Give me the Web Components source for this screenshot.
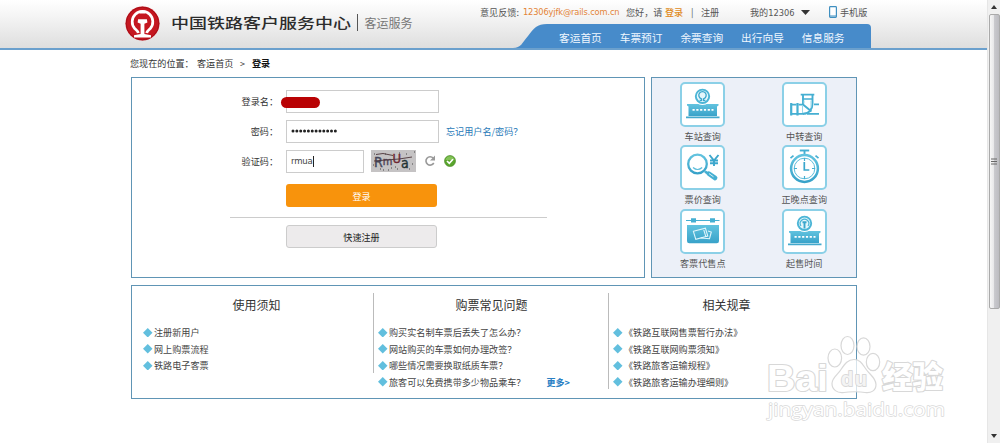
<!DOCTYPE html>
<html lang="zh-CN">
<head>
<meta charset="utf-8">
<title>登录 | 客运服务</title>
<style>
  html, body { margin: 0; height: 443px; overflow: hidden; background: #fff; }
  body { position: relative; font: 9.1px/12px "Noto Sans CJK SC", sans-serif; color: #444; }
</style>
</head>
<body>
<login-page></login-page>
<script>
const railMark = `
  <path d="M-4.200 9.600C-4.600 7.400-6 6.700-7.800 5A10.300 10.300 0 1 1 7.800 5C6 6.700 4.600 7.400 4.200 9.600" fill="none" stroke="#fff" stroke-width="2.700"/>
  <path d="M-3-13h6v3h-6z" fill="#fff"/>
  <path d="M-4.400-4.200h8.800l.5 3.200-3 1.300v10.200l6.600 1.300v2.300h-17v-2.300l6.600-1.300v-10.200l-3-1.300z" fill="#fff"/>`;

const building = (mark) => `
  <path d="M7 22h31.500v1.600l-1.500 1V34H8.500v-9.400L7 23.600z" fill="url(#g)"/>
  <path d="M6 34.600h33.500v1.700H6z" fill="#43a9cd"/>
  <path d="M12.500 27.800h21" stroke="#fff" stroke-width="1.800" stroke-dasharray="2.200 1.600"/>
  <circle cx="22.500" cy="14.300" r="8.600" fill="#fff"/>
  <circle cx="22.500" cy="14.300" r="6.700" fill="#e5f6fb" stroke="#4cb5d6" stroke-width="1.900"/>
  ${mark}`;

const serviceIcons = {
  station: building(`<path d="M19.600 18.300h1.900v-1.400a3.700 3.700 0 1 1 2 0v1.400h1.900" fill="none" stroke="#3ba6cc" stroke-width="1.300"/>`),
  saletime: building(`<path d="M19 17a4.300 4.300 0 1 1 7 0" fill="none" stroke="#4cb5d6" stroke-width="1.200"/><path d="M20.500 13.300h4M22.500 13v6.500" stroke="#3ba6cc" stroke-width="1.900"/>`),
  transfer: `
    <path d="M18.700 12.700h13.600M20 17h11M10 22.600h4.500M16.500 22.600H21M10 31.800h12M32 22.400h5M25 31.800h12" fill="none" stroke="#45afd2" stroke-width="1.700"/>
    <path d="M21 13v9.500l8.500 7M30.500 13v9c0 5-3.500 9.800-9.500 9.800" fill="none" stroke="#45afd2" stroke-width="1.900"/>
    <path d="M9.200 21v12.500M15.500 21v12.500" stroke="#45afd2" stroke-width="2.200"/>
    <path d="M20.500 23v8M22 18.500v3M29 18.500v7" stroke="#9ad8ea" stroke-width="1"/>`,
  price: `
    <circle cx="17.500" cy="19" r="9.300" fill="#fff" stroke="url(#g)" stroke-width="2.300"/>
    <path d="M13 22.500q4.500 4 9.200 0" fill="none" stroke="#5cbcda" stroke-width="1.200"/>
    <path d="M25 26.500l2.300 1.600" stroke="#45afd2" stroke-width="2.500"/>
    <path d="M28.800 28.600l6.300 4.400" stroke="#45afd2" stroke-width="4.600" stroke-linecap="round"/>
    <path d="M29 28.600l4.500 3.200" stroke="#d5eff7" stroke-width="1"/>
    <path d="M29.500 10l4.500 5.500L38.500 10M34 15v6M30 15.500h8M30 18.200h8" fill="none" stroke="#3ba6cc" stroke-width="1.900"/>`,
  clock: `
    <path d="M17.800 5.500h9.400" stroke="#45afd2" stroke-width="1.900"/><path d="M22.500 6v5" stroke="#45afd2" stroke-width="1.900"/>
    <path d="M8.500 13.200l3-2.600M36.500 13.200l-3-2.600" stroke="#45afd2" stroke-width="1.700"/>
    <circle cx="22.500" cy="23.500" r="13.400" fill="#fff" stroke="url(#g)" stroke-width="2.500"/>
    <circle cx="22.500" cy="23.500" r="10.300" fill="none" stroke="#5cbcda" stroke-width="1"/>
    <path d="M22.500 13v3M22.500 31v3M12 23.500h3M30 23.500h3" stroke="#45afd2" stroke-width="1.200"/>
    <path d="M22.300 17v8h5" fill="none" stroke="#3ba6cc" stroke-width="1.700"/>`,
  agency: `
    <path d="M6 11.500h33.500" stroke="#45afd2" stroke-width="1.200"/>
    <path d="M11 9.300h5v4.300h-5zM30 9.300h5v4.300h-5z" fill="#45afd2"/>
    <path d="M7 16h32v16q0 2.300-2.300 2.300H9.300Q7 34.300 7 32z" fill="url(#g)"/>
    <path d="M13.400 22.300l12-3.200 2.400 8-12 3.300zM28 22l3.300 1-1.800 6.700-9-.8M23.500 19.800l2.300 7.800" fill="none" stroke="#e0f5fb" stroke-width="1.100"/>`
};

// Base class: puts the markup of each element in its shadow root
class BaseElement extends HTMLElement {
  constructor() {
    super();
    this.attachShadow({ mode: "open" });
  }

  connectedCallback() {
    this.shadowRoot.innerHTML = this.template();
  }
}

class SiteHeader extends BaseElement {
  template() {
    return `
      <style>
        :host { display: block; height: 48px; border-bottom: 2px solid #6ba0cd; background: linear-gradient(#fff, #f4f4f4 35%, #dedede); }
        .bar { display: grid; grid-template-columns: 40px 186px 120px 1fr; padding-left: 125px; height: 48px; }
        .logo { width: 35px; height: 35px; margin-top: 5.500px; }
        .name { font-size: 18px; line-height: 20px; font-weight: 500; color: #2c2c2c; white-space: nowrap; margin: 12px 0 0 6px; height: 20px; transform: scaleY(.76); }
        .sub { font-size: 12px; line-height: 18px; color: #777; border-left: 1.500px solid #555; height: 17px; margin: 14px 0 0 6px; padding-left: 6.500px; white-space: nowrap; }
        .right { display: flex; flex-direction: column; }
        .utility { display: grid; grid-template-columns: 43px 103px 39px 26px 10px 49px 51px 28px 11px 32px; margin-left: 9px; height: 24px; line-height: 24px; align-items: center; white-space: nowrap; color: #555; }
        .utility span { height: 24px; }
        .mail { color: #e38335; font: 9.200px/24px "DejaVu Sans Condensed", sans-serif; letter-spacing: -.14px; }
        .num { font: 9.200px/12px "DejaVu Sans Condensed", sans-serif; }
        .enter { color: #e08b22; font-weight: 500; }
        nav { position: relative; margin-left: 42px; width: 358px; height: 24px; }
        .shape { display: block; width: 358px; height: 24px; }
        .links { position: absolute; inset: 0; display: grid; grid-template-columns: repeat(5, 60.700px); padding-left: 46px; font-size: 10.700px; line-height: 27px; color: #f0f7ff; white-space: nowrap; }
      </style>
      <div class="bar">
        <svg class="logo" viewBox="-17.500 -17.500 35 35"><circle r="17" fill="#c51720"/><circle r="16.300" fill="none" stroke="#a70e18" stroke-width="1"/>${railMark}</svg>
        <div class="name">中国铁路客户服务中心</div>
        <div class="sub">客运服务</div>
        <div class="right">
          <div class="utility">
            <span>意见反馈:</span><span class="mail">12306yjfk@rails.com.cn</span><span>您好，请</span><span class="enter">登录</span><span>|</span><span>注册</span><span>我的<span class="num">12306</span></span>
            <svg width="9" height="5" viewBox="0 0 9 5"><path d="M0 0h9L4.500 5z" fill="#333"/></svg>
            <svg width="8" height="12" viewBox="0 0 8 12"><rect x=".6" y=".6" width="6.800" height="10.800" rx=".8" fill="#fff" stroke="#3f8fc0" stroke-width="1.200"/><path d="M1 10h6" stroke="#3f8fc0"/></svg>
            <span>手机版</span>
          </div>
          <nav>
            <svg class="shape" viewBox="0 0 358 24"><path d="M0 24C8 24 9 19 15 12C21 4 24 0 34 0H354q4 0 4 4V24z" fill="#478bca"/></svg>
            <div class="links"><span>客运首页</span><span>车票预订</span><span>余票查询</span><span>出行向导</span><span>信息服务</span></div>
          </nav>
        </div>
      </div>`;
  }
}

class BlueFrame extends BaseElement {
  template() {
    return `
      <style>
        :host { display: block; box-sizing: border-box; border: 1px solid #6095b5; background: var(--frame-fill, #fff); }
      </style>
      <slot></slot>`;
  }
}

class LoginRow extends BaseElement {
  template() {
    return `
      <style>
        :host { display: grid; grid-template-columns: 146px 1fr; height: 23px; line-height: 24px; margin-bottom: 7px; }
        .label { text-align: right; color: #333; white-space: nowrap; }
        .field { display: flex; align-items: center; padding-left: 8px; }
      </style>
      <div class="label">${this.getAttribute("label")}</div>
      <div class="field"><slot></slot></div>`;
  }
}

class LoginForm extends BaseElement {
  template() {
    return `
      <style>
        :host { display: block; padding-top: 11px; }
        .input { position: relative; box-sizing: border-box; width: 153px; height: 23px; border: 1px solid #ccc; background: #fff; display: flex; align-items: center; padding-left: 4px; color: #444; }
        .short { width: 78px; font: 9.500px/20px "DejaVu Sans Condensed", sans-serif; letter-spacing: -.2px; }
        .caret { width: 1px; height: 11px; background: #222; }
        .mask { position: absolute; left: -6px; top: 6px; width: 39px; height: 11px; border-radius: 6px; background: #b90204; }
        .forgot { margin-left: 7px; color: #2a7ab8; }
        .captcha { margin-left: 7px; }
        .refresh { margin-left: 8px; }
        .ok { margin-left: 8px; }
        .btn { box-sizing: border-box; width: 151px; height: 23px; line-height: 24px; margin-left: 154px; border-radius: 3px; text-align: center; }
        .orange { margin-top: 12px; background: #f8930c; color: #fff; }
        .gray { border: 1px solid #ccc; line-height: 22px; background: #edebec; color: #222; }
        hr { border: 0; height: 1px; background: #ccc; margin: 10px 0 7px 98px; width: 317px; }
      </style>
      <login-row label="登录名："><div class="input"><span class="mask"></span></div></login-row>
      <login-row label="密码：">
        <div class="input"><svg width="47" height="6" viewBox="0 0 47 6"><path d="M2 3h44" stroke="#222" stroke-width="3" stroke-linecap="round" stroke-dasharray="0 3.850"/></svg></div>
        <span class="forgot">忘记用户名/密码？</span>
      </login-row>
      <login-row label="验证码：">
        <div class="input short">rmua<span class="caret"></span></div>
        <svg class="captcha" width="45" height="22" viewBox="0 0 45 22">
          <path d="M0 0h45v22H0z" fill="#c5c3c4"/>
          <text x="3" y="16.500" font-family="DejaVu Sans Condensed" font-size="14" stroke-width=".4"><tspan fill="#44465a" stroke="#44465a">R</tspan><tspan dy="-1.500" font-size="11" fill="#514558" stroke="#514558">m</tspan><tspan dy="-2" font-size="13" fill="#6d2733" stroke="#6d2733">U</tspan><tspan dy="4.500" fill="#233" stroke="#233">a</tspan></text>
          <path d="M3 11l12-1 13-1 13-2M5 4.500l7-1 10 2" fill="none" stroke="#4b3339" stroke-width=".9"/>
          <path d="M3 4h1M9 19h1M14 4h1M20 18h1M17 20h1M26 19h1M35 4h1M41 14h1M43 2h1M38 19h1M28 3h1M24 17h1M12 20h1M2 15h1" stroke="#444"/>
        </svg>
        <svg class="refresh" width="12" height="12" viewBox="0 0 12 12"><path d="M9.200 3A4.200 4.200 0 1 0 9.800 8" fill="none" stroke="#999" stroke-width="1.600"/><path d="M11 .5v5H6z" fill="#999"/></svg>
        <svg class="ok" width="12" height="12" viewBox="0 0 12 12"><circle cx="6" cy="6" r="5.500" fill="#5aa52d" stroke="#438420" stroke-width=".6"/><path d="M1.500 5a4.600 4.600 0 0 1 9 0z" fill="#83c257"/><path d="M3 6l2.300 2.300L9 4.200" fill="none" stroke="#fff" stroke-width="1.700"/></svg>
      </login-row>
      <div class="btn orange">登录</div>
      <hr>
      <div class="btn gray">快速注册</div>`;
  }
}

class ServiceItem extends BaseElement {
  template() {
    return `
      <style>
        :host { display: flex; flex-direction: column; align-items: center; height: 63.300px; color: #555; }
        .icon { box-sizing: border-box; width: 45px; height: 45px; border: 2px solid #8bd0e7; border-radius: 5px; background: #fff; }
        svg { display: block; width: 45px; height: 45px; margin: -2px; }
        .text { line-height: 12px; margin-top: 3px; white-space: nowrap; }
      </style>
      <div class="icon"><svg viewBox="0 0 45 45">
        <defs><linearGradient id="g" x2="0" y2="1"><stop stop-color="#62c3df"/><stop offset="1" stop-color="#38a2c9"/></linearGradient></defs>
        ${serviceIcons[this.getAttribute("icon")]}
      </svg></div>
      <div class="text"><slot></slot></div>`;
  }
}

class InfoColumn extends BaseElement {
  template() {
    const items = this.getAttribute("items").split("|");
    const more = this.getAttribute("more");
    return `
      <style>
        :host { display: block; box-sizing: border-box; width: 235px; background: linear-gradient(#bbb, #bbb) right top / var(--rule, 0) var(--rule-height, 80px) no-repeat; }
        .title { font-size: 12px; line-height: 16px; padding-top: 4px; text-align: center; color: #333; }
        .row { display: flex; align-items: center; height: 16.600px; padding-left: 4px; color: #444; white-space: nowrap; }
        .list { margin-top: 11px; }
        svg { margin-right: 1.500px; flex: none; }
        .more { color: #2a7fc4; font-weight: 700; margin-left: 21px; }
      </style>
      <div class="title"><slot></slot></div>
      <div class="list">
        ${items
          .map((item, i) => {
            const link = more && i === items.length - 1 ? `<span class="more">${more}</span>` : "";
            return `<div class="row"><svg width="9.500" height="9.500" viewBox="0 0 10 10"><path d="M5 0l5 5-5 5-5-5z" fill="#62bfde"/></svg><span>${item}</span>${link}</div>`;
          })
          .join("")}
      </div>`;
  }
}

class ScrollTrack extends BaseElement {
  template() {
    return `
      <style>
        :host { box-sizing: border-box; width: 13px; height: 443px; background: #f0f0f0; border-left: 1px solid #e6e6e6; display: flex; flex-direction: column; align-items: center; }
        .arrow { height: 14px; display: flex; align-items: center; }
        .thumb { box-sizing: border-box; width: 11px; height: 295px; border: 1px solid #aaa; border-radius: 2px; background: linear-gradient(90deg, #f7f7f7, #e6e6e8 45%, #c9c9cd 50%, #bcbcc1); display: flex; align-items: center; justify-content: center; }
        .down { margin-top: auto; }
      </style>
      <div class="arrow"><svg width="6" height="4"><path d="M0 4l3-4 3 4z" fill="#333"/></svg></div>
      <div class="thumb"><svg width="6" height="7"><path d="M0 1h6M0 3.500h6M0 6h6" stroke="#666"/></svg></div>
      <div class="arrow down"><svg width="6" height="4"><path d="M0 0h6L3 4z" fill="#333"/></svg></div>`;
  }
}

class WaterMark extends BaseElement {
  template() {
    return `
      <style>
        :host { position: absolute; left: 760px; top: 330px; }
        svg { display: block; }
        text { paint-order: stroke; }
      </style>
      <svg width="195" height="95" viewBox="760 330 195 95">
        <g fill="#fff" fill-opacity=".75" stroke="#d8d8d8" stroke-width="1.200">
          <ellipse cx="834.800" cy="358" rx="6.800" ry="9"/>
          <ellipse cx="847.500" cy="345.500" rx="6.500" ry="9"/>
          <ellipse cx="863.500" cy="346.500" rx="6.500" ry="8.700"/>
          <ellipse cx="873" cy="362" rx="6.700" ry="8.700"/>
          <path d="M854 359.500c7 0 9 6 13 11 4 5 9 8 9 14 0 6-5 9-11 8-5-1-16-1-21 0-7 1-12-3-12-9 0-6 6-9 9-14 4-6 7-10 13-10z"/>
        </g>
        <g fill="#fff" stroke="#d8d8d8" stroke-width="2.200" stroke-linejoin="round">
          <text x="767" y="390.500" font-family="Liberation Sans" font-size="37" font-weight="700" textLength="61" lengthAdjust="spacingAndGlyphs">Bai</text>
          <text x="841" y="386" font-family="Liberation Sans" font-size="20" font-weight="700" textLength="26" fill="#f4f4f4" stroke-width="1.800">du</text>
          <text x="882" y="388" font-family="Noto Sans CJK SC" font-size="30.500" font-weight="900" textLength="61">经验</text>
          <text x="768" y="416" font-family="Open Sans" font-size="19" textLength="177" lengthAdjust="spacingAndGlyphs" stroke-width="1.400">jingyan.baidu.com</text>
        </g>
      </svg>`;
  }
}

class LoginPage extends BaseElement {
  template() {
    return `
      <style>
        :host { display: grid; grid-template-columns: 987px 13px; height: 443px; }
        main { width: 726px; margin-left: 131px; }
        .crumb { height: 27px; line-height: 26px; white-space: pre; color: #333; display: grid; grid-template-columns: 67px 43px 12px auto; margin-left: -1px; }
        .crumb b { font-weight: 700; color: #111; }
        .top { display: grid; grid-template-columns: 514px 206px; gap: 6px; }
        .top blue-frame { height: 201px; }
        .services { --frame-fill: #ecf0f8; }
        .grid { display: grid; grid-template-columns: 101.500px 101.500px; padding-top: 4px; }
        .info { margin-top: 7px; height: 114px; }
        .columns { display: flex; padding: 7px 0 0 7px; }
        .ruled { --rule: 1px; }
        .tall { --rule-height: 96px; }
      </style>
      <div>
        <site-header></site-header>
        <main>
          <div class="crumb"><span>您现在的位置：</span><span>客运首页</span><span>&gt;</span><b>登录</b></div>
          <div class="top">
            <blue-frame><login-form></login-form></blue-frame>
            <blue-frame class="services">
              <div class="grid">
                <service-item icon="station">车站查询</service-item>
                <service-item icon="transfer">中转查询</service-item>
                <service-item icon="price">票价查询</service-item>
                <service-item icon="clock">正晚点查询</service-item>
                <service-item icon="agency">客票代售点</service-item>
                <service-item icon="saletime">起售时间</service-item>
              </div>
            </blue-frame>
          </div>
          <blue-frame class="info">
            <div class="columns">
              <info-column class="ruled" items="注册新用户|网上购票流程|铁路电子客票">使用须知</info-column>
              <info-column class="ruled tall" more="更多&gt;" items="购买实名制车票后丢失了怎么办？|网站购买的车票如何办理改签？|哪些情况需要换取纸质车票？|旅客可以免费携带多少物品乘车？">购票常见问题</info-column>
              <info-column items="《铁路互联网售票暂行办法》|《铁路互联网购票须知》|《铁路旅客运输规程》|《铁路旅客运输办理细则》">相关规章</info-column>
            </div>
          </blue-frame>
        </main>
      </div>
      <scroll-track></scroll-track>
      <water-mark></water-mark>`;
  }
}

customElements.define("site-header", SiteHeader);
customElements.define("blue-frame", BlueFrame);
customElements.define("login-row", LoginRow);
customElements.define("login-form", LoginForm);
customElements.define("service-item", ServiceItem);
customElements.define("info-column", InfoColumn);
customElements.define("scroll-track", ScrollTrack);
customElements.define("water-mark", WaterMark);
customElements.define("login-page", LoginPage);
</script>
</body>
</html>
